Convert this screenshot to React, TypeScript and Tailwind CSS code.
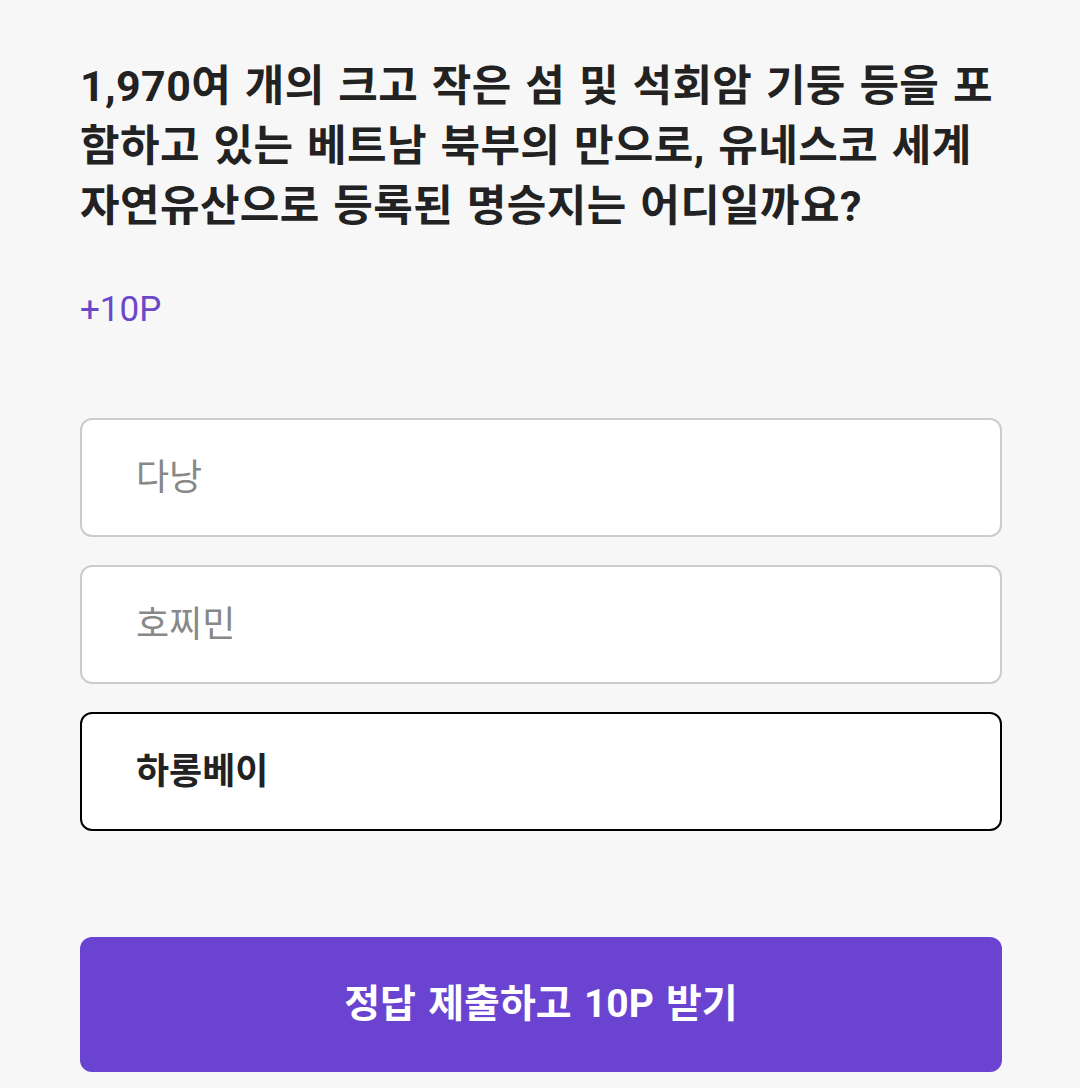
import { useState } from "react";

const options = ["다낭", "호찌민", "하롱베이"];

export default function App() {
	const [selected, setSelected] = useState(2);

	return (
		<main
			className="min-h-[1088px] w-full bg-[#f7f7f7] pl-20 pr-[78px] pt-[56px]"
			style={{ fontFamily: "Roboto, 'Noto Sans CJK KR', sans-serif" }}
		>
			<h1 className="text-[43px] leading-[60px] font-bold text-[#222222] tracking-[0.4px] [word-spacing:2.5px]">
				1,970여 개의 크고 작은 섬 및 석회암 기둥 등을 포함하고 있는 베트남 북부의 만으로, 유네스코 세계 자연유산으로 등록된 명승지는 어디일까요?
			</h1>

			<p className="mt-[54px] text-[35px] leading-[40px] text-[#6b48c8]">+10P</p>

			<ul className="mt-[88px] flex flex-col gap-[28px]">
				{options.map((option, i) => (
					<li key={option}>
						<button
							onClick={() => setSelected(i)}
							className={
								i === selected
									? "w-full h-[119px] rounded-[12px] border-2 border-black bg-white pl-[54px] text-left text-[36px] font-bold text-[#222222]"
									: "w-full h-[119px] rounded-[12px] border-2 border-[#cccccc] bg-white pl-[54px] text-left text-[36px] text-[#888888]"
							}
						>
							{option}
						</button>
					</li>
				))}
			</ul>

			<button className="mt-[106px] w-full h-[135px] rounded-[12px] bg-[#6a44d1] text-[39px] font-bold text-white [word-spacing:2.5px]">
				정답 제출하고 10P 받기
			</button>
		</main>
	);
}
